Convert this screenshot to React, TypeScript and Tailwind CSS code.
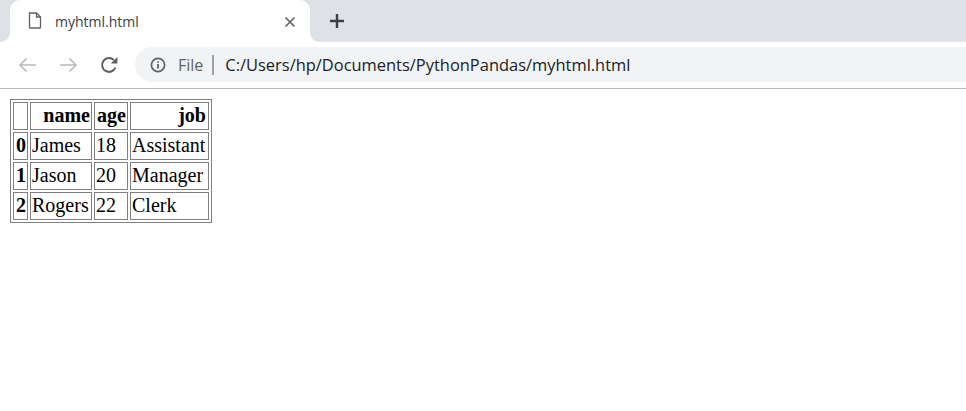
const rows = [
  { idx: "0", name: "James", age: "18", job: "Assistant" },
  { idx: "1", name: "Jason", age: "20", job: "Manager" },
  { idx: "2", name: "Rogers", age: "22", job: "Clerk" },
];

const th = "border border-[#808080] px-px pt-0 pb-[2px] h-[28px] text-right font-bold align-middle leading-[23px]";
const td = "border border-[#808080] px-px pt-0 pb-[2px] h-[28px] text-left align-middle leading-[23px]";

function Flare({ side }: { side: "left" | "right" }) {
  const d = side === "left" ? "M10 0V10H0C6 10 10 6 10 0Z" : "M0 0V10H10C4 10 0 6 0 0Z";
  return (
    <svg width="10" height="10" viewBox="0 0 10 10" className="shrink-0 self-end">
      <path d={d} fill="#ffffff" />
    </svg>
  );
}

export default function App() {
  return (
    <div className="w-[966px] h-[411px] bg-white overflow-hidden font-['Open_Sans',sans-serif]">
      {/* tab strip */}
      <div className="flex h-[42px] bg-[#dee1e6]">
        <Flare side="left" />
        <div className="flex items-center w-[300px] shrink-0 h-[42px] bg-white rounded-t-[10px] pl-[18px] pr-[14px]">
          <svg width="14" height="17" viewBox="0 0 14 17" fill="none" className="shrink-0 mt-[-1px]">
            <path d="M1.5 1H8.5L12.5 5V15.5C12.5 15.8 12.3 16 12 16H2C1.7 16 1.5 15.8 1.5 15.5V1Z" stroke="#5f6368" strokeWidth="1.3" />
            <path d="M8.5 1V5H12.5" stroke="#5f6368" strokeWidth="1.3" />
          </svg>
          <span className="ml-[13px] text-[14px] text-[#3c4043]">myhtml.html</span>
          <svg width="12" height="12" viewBox="0 0 12 12" className="ml-auto mt-px">
            <path d="M1.5 1.5L10.5 10.5M10.5 1.5L1.5 10.5" stroke="#5f6368" strokeWidth="1.7" />
          </svg>
        </div>
        <Flare side="right" />
        <svg width="16" height="16" viewBox="0 0 16 16" className="ml-[9px] mt-[13px]">
          <path d="M8 1V15M1 8H15" stroke="#3c4043" strokeWidth="2.4" />
        </svg>
      </div>

      {/* toolbar */}
      <div className="flex items-center h-[47px] border-b border-[#b8b9bb] bg-white">
        <div className="flex items-center pl-[18px] gap-[22px] shrink-0">
          <svg width="19" height="16" viewBox="0 0 19 16" fill="none">
            <path d="M18 8H2M8.5 1.5L2 8L8.5 14.5" stroke="#b9bbbe" strokeWidth="1.7" />
          </svg>
          <svg width="19" height="16" viewBox="0 0 19 16" fill="none">
            <path d="M1 8H17M10.5 1.5L17 8L10.5 14.5" stroke="#b9bbbe" strokeWidth="1.7" />
          </svg>
          <svg width="18" height="18" viewBox="0 0 18 18" fill="none">
            <path d="M15.4 11.5A6.9 6.9 0 1 1 13.8 4" stroke="#5a5d61" strokeWidth="2" />
            <path d="M17.4 1V7.6H10.8Z" fill="#5a5d61" />
          </svg>
        </div>
        <div className="flex items-center h-[35px] flex-1 ml-[17px] mb-[1px] bg-[#f1f3f4] rounded-l-full pl-[15px]">
          <svg width="16" height="16" viewBox="0 0 16 16" fill="none" className="shrink-0">
            <circle cx="8" cy="8" r="6.6" stroke="#5f6368" strokeWidth="1.7" />
            <path d="M8 7V11.6" stroke="#5f6368" strokeWidth="1.8" />
            <path d="M8 4.2V5.8" stroke="#5f6368" strokeWidth="1.8" />
          </svg>
          <span className="ml-[12px] mt-px text-[16px] text-[#5f6368]">File</span>
          <span className="ml-[9px] w-[2px] h-[20px] bg-[#a0a3a6]" />
          <span className="ml-[11px] mt-px text-[16.45px] text-[#202124]">C:/Users/hp/Documents/PythonPandas/myhtml.html</span>
        </div>
      </div>

      {/* page */}
      <div className="pl-[10px] pt-[10px]">
        <table className="border border-[#808080] border-separate border-spacing-[2px] text-[20px] text-black font-['Liberation_Serif',serif]">
          <thead>
            <tr>
              <th className={`${th} w-[15px]`}></th>
              <th className={`${th} w-[62px]`}>name</th>
              <th className={`${th} w-[34px]`}>age</th>
              <th className={`${th} w-[79px] pr-[2px]`}>job</th>
            </tr>
          </thead>
          <tbody>
            {rows.map((r) => (
              <tr key={r.idx}>
                <th className={th}>{r.idx}</th>
                <td className={td}>{r.name}</td>
                <td className={td}>{r.age}</td>
                <td className={td}>{r.job}</td>
              </tr>
            ))}
          </tbody>
        </table>
      </div>
    </div>
  );
}
